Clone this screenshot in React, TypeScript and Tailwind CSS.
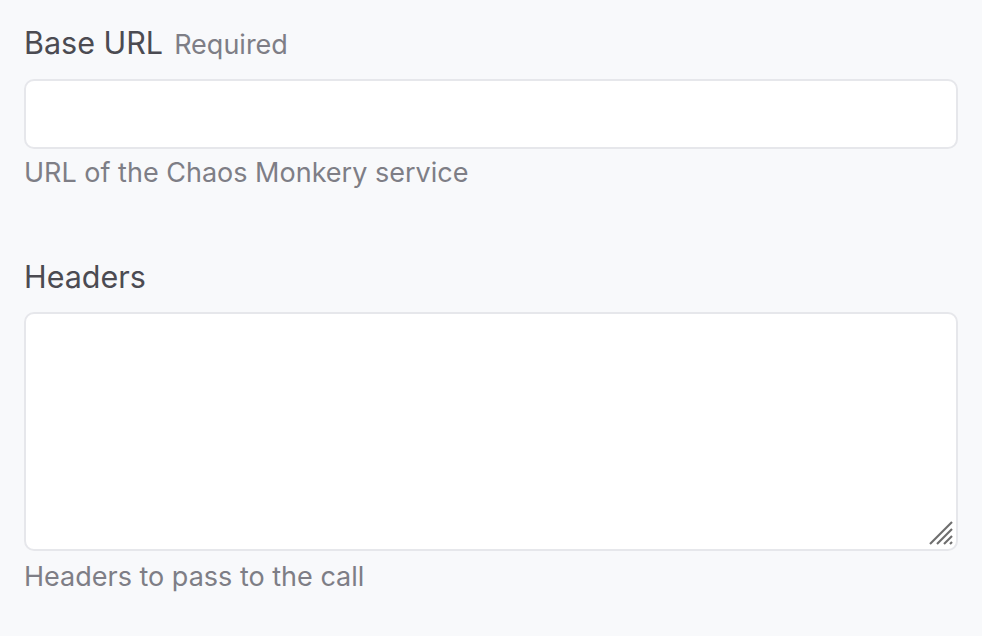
import React from "react";

export default function App() {
  return (
    <div
      className="w-[982px] h-[636px] bg-[#f8f9fb] px-6 pt-[23px] flex flex-col"
      style={{ fontFamily: "Inter, 'Noto Sans', sans-serif" }}
    >
      <div className="flex items-baseline gap-[11px] h-[40px] leading-[40px]">
        <span className="text-[30.5px] text-[#4b4b52]">Base URL</span>
        <span className="text-[27px] text-[#7e7e86]">Required</span>
      </div>
      <input
        className="mt-[16px] h-[70px] w-full rounded-[10px] border-2 border-[#e6e7eb] bg-white outline-none"
      />
      <div className="mt-[6px] h-[36px] leading-[36px] text-[27px] text-[#7e7e86]">
        URL of the Chaos Monkery service
      </div>
      <div className="mt-[66px] h-[40px] leading-[40px] text-[30.5px] text-[#4b4b52]">Headers</div>
      <div className="relative mt-[15px] h-[239px]">
        <textarea className="block h-full w-full resize-none rounded-[10px] border-2 border-[#e6e7eb] bg-white outline-none" />
        <svg
          className="absolute right-[4px] bottom-[4px]"
          width="26"
          height="26"
          viewBox="0 0 26 26"
        >
          <g stroke="#6e6e6e" strokeWidth="2.2" strokeLinecap="butt">
            <line x1="2" y1="23" x2="24" y2="1" />
            <line x1="9" y1="23" x2="24" y2="8" />
            <line x1="16" y1="23" x2="24" y2="15" />
            <line x1="22" y1="23" x2="24" y2="21" />
          </g>
        </svg>
      </div>
      <div className="mt-[8px] h-[36px] leading-[36px] text-[27px] text-[#7e7e86]">
        Headers to pass to the call
      </div>
    </div>
  );
}
